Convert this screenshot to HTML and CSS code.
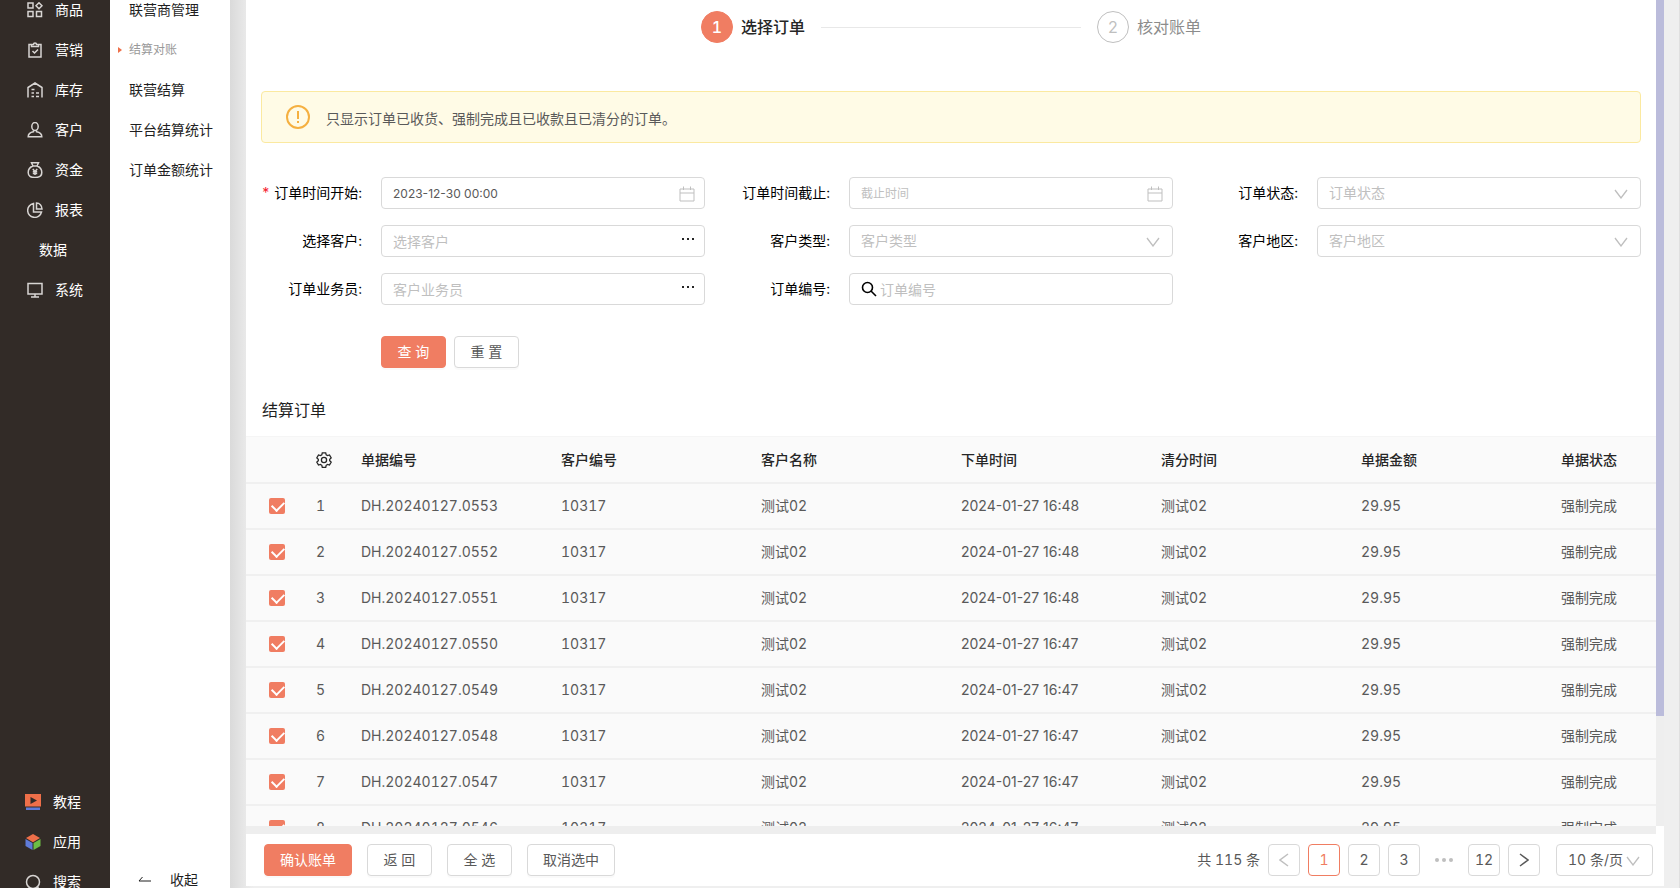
FILE: index.html
```html
<!DOCTYPE html>
<html lang="zh-CN">
<head>
    <meta charset="UTF-8">
    <meta name="viewport" content="width=device-width, initial-scale=1.0">
    <title>结算对账</title>
    <link rel="stylesheet" href="styles.css">
</head>
<body>
    <nav class="sidebar">
        <ul class="menu">
            <li><a href="#"><svg class="icon" viewBox="0 0 16 16"><rect x="1" y="1" width="5" height="5"/><rect x="1" y="9.500" width="5" height="5"/><rect x="9.500" y="9.500" width="5" height="5"/><path d="M12 .800 15 3.800 12 6.800 9 3.800z"/></svg>商品</a></li>
            <li><a href="#"><svg class="icon" viewBox="0 0 16 16"><path d="M4.500 2.500h-2.500v12.500h12v-12.500h-2.500M4.500 4.500v-2h2c0-2 3-2 3 0h2v2zM5.500 9l2 2 3.500-3.500"/></svg>营销</a></li>
            <li><a href="#"><svg class="icon" viewBox="0 0 16 16"><path d="M1 15.500V5.500L8 1l7 4.500v10M4.500 7.500h3M4.500 11h2.500M9 11h3M4.500 14.500h2.500M9 14.500h3"/></svg>库存</a></li>
            <li><a href="#"><svg class="icon" viewBox="0 0 16 16"><ellipse cx="8" cy="4.500" rx="3.200" ry="4"/><path d="M6.500 8.200v1.500C3 10.200 1.200 12 1.200 14.800h13.600c0-2.800-1.800-4.600-5.300-5.100V8.200"/></svg>客户</a></li>
            <li><a href="#"><svg class="icon" viewBox="0 0 16 16"><path d="M4.500.800h7L10 4c3 1 4.800 3.500 4.800 6.500 0 3.500-2.500 5-6.800 5s-6.800-1.500-6.800-5C1.200 7.500 3 5 6 4zM5.500 4h5M5.800 7 8 9.500 10.200 7M8 9.500V13M5.800 9.700h4.400M5.800 11.500h4.400"/></svg>资金</a></li>
            <li><a href="#"><svg class="icon" viewBox="0 0 16 16"><path d="M6.500 1.500A7 7 0 1 0 14.500 10H6.500zM9.500 1v6H15C15 3.500 12.500 1 9.500 1z"/></svg>报表</a></li>
            <li><a href="#" class="no-icon">数据</a></li>
            <li><a href="#"><svg class="icon" viewBox="0 0 16 16"><path d="M1 1.500h14v10.500H1zM8 12v3M4 15h8"/></svg>系统</a></li>
        </ul>
        <ul class="menu tools">
            <li><a href="#"><svg class="icon fill" viewBox="0 0 16 16"><path fill="#ee6f49" d="M0 0h16v12.500H0z"/><path fill="#322b27" d="M5.500 3v7L12 6.500z"/><path fill="#5f7bd8" d="M1 13.500h14V16H1z"/></svg>教程</a></li>
            <li><a href="#"><svg class="icon fill" viewBox="0 0 16 16"><path fill="#ee6f49" d="M8 0l7 4-7 4.200L1 4z"/><path fill="#5f7bd8" d="M.500 5l7 4v7l-7-4z"/><path fill="#6cbd45" d="M15.500 5l-7 4v7l7-4z"/></svg>应用</a></li>
            <li><a href="#"><svg class="icon" viewBox="0 0 16 16"><circle cx="8" cy="8" r="6.500"/><path d="M12 12.500l2.500 3"/></svg>搜索</a></li>
        </ul>
    </nav>

    <nav class="submenu">
        <ul>
            <li><a href="#">联营商管理</a></li>
            <li><a href="#" class="active">结算对账</a></li>
            <li><a href="#">联营结算</a></li>
            <li><a href="#">平台结算统计</a></li>
            <li><a href="#">订单金额统计</a></li>
        </ul>
        <button type="button" class="collapse"><svg viewBox="0 0 14 8"><path d="M4.500 1 1 5h12"/></svg>收起</button>
    </nav>

    <main class="main">
        <div class="panel">
            <div class="scroll-area">
                <div class="content">
                    <ol class="steps">
                        <li class="step current"><span class="num">1</span>选择订单</li>
                        <li class="line"></li>
                        <li class="step"><span class="num">2</span>核对账单</li>
                    </ol>

                    <div class="alert">
                        <svg viewBox="0 0 24 24"><circle cx="12" cy="12" r="11"/><path d="M12 6v8M12 16v2"/></svg>
                        <span>只显示订单已收货、强制完成且已收款且已清分的订单。</span>
                    </div>

                    <form class="search">
                        <div class="field">
                            <label for="start" class="required">订单时间开始:</label>
                            <div class="control">
                                <input type="text" id="start" class="small" value="2023-12-30 00:00">
                                <svg class="calendar" viewBox="0 0 16 16"><path d="M1 3h14v12H1zM1 7h14M4.500.500V4M11.500.500V4"/></svg>
                            </div>
                        </div>
                        <div class="field">
                            <label for="end">订单时间截止:</label>
                            <div class="control">
                                <input type="text" id="end" class="small" placeholder="截止时间">
                                <svg class="calendar" viewBox="0 0 16 16"><path d="M1 3h14v12H1zM1 7h14M4.500.500V4M11.500.500V4"/></svg>
                            </div>
                        </div>
                        <div class="field">
                            <label for="status">订单状态:</label>
                            <div class="control">
                                <select id="status"><option>订单状态</option></select>
                                <svg class="arrow" viewBox="0 0 14 10"><path d="M1 1l6 8 6-8"/></svg>
                            </div>
                        </div>
                        <div class="field">
                            <label for="customer">选择客户:</label>
                            <div class="control">
                                <input type="text" id="customer" placeholder="选择客户">
                                <button type="button" class="more" aria-label="选择客户"><svg viewBox="0 0 14 4"><path d="M1 1h2v2H1zM6 1h2v2H6zM11 1h2v2h-2z"/></svg></button>
                            </div>
                        </div>
                        <div class="field">
                            <label for="type">客户类型:</label>
                            <div class="control">
                                <select id="type"><option>客户类型</option></select>
                                <svg class="arrow" viewBox="0 0 14 10"><path d="M1 1l6 8 6-8"/></svg>
                            </div>
                        </div>
                        <div class="field">
                            <label for="area">客户地区:</label>
                            <div class="control">
                                <select id="area"><option>客户地区</option></select>
                                <svg class="arrow" viewBox="0 0 14 10"><path d="M1 1l6 8 6-8"/></svg>
                            </div>
                        </div>
                        <div class="field">
                            <label for="salesman">订单业务员:</label>
                            <div class="control">
                                <input type="text" id="salesman" placeholder="客户业务员">
                                <button type="button" class="more" aria-label="选择业务员"><svg viewBox="0 0 14 4"><path d="M1 1h2v2H1zM6 1h2v2H6zM11 1h2v2h-2z"/></svg></button>
                            </div>
                        </div>
                        <div class="field">
                            <label for="number">订单编号:</label>
                            <div class="control">
                                <input type="text" id="number" class="with-icon" placeholder="订单编号">
                                <svg class="magnifier" viewBox="0 0 16 16"><circle cx="6.500" cy="6.500" r="5"/><path d="M10 10l5 5"/></svg>
                            </div>
                        </div>
                        <div class="actions">
                            <button type="button" class="btn primary short">查 询</button>
                            <button type="reset" class="btn short">重 置</button>
                        </div>
                    </form>

                    <h2>结算订单</h2>

                    <table>
                        <colgroup>
                            <col class="col-check">
                            <col class="col-index">
                            <col class="col-data"><col class="col-data"><col class="col-data">
                            <col class="col-data"><col class="col-data"><col class="col-data">
                            <col>
                        </colgroup>
                        <thead>
                            <tr>
                                <th></th>
                                <th class="index"><svg class="gear" viewBox="0 0 16 16"><path d="M6.300.800h3.400l.5 2 1.300.800 2-.600 1.700 2.900-1.500 1.400v1.500l1.500 1.400-1.700 2.900-2-.600-1.300.800-.5 2H6.300l-.5-2-1.300-.800-2 .600-1.700-2.900 1.500-1.400V7.300L.800 5.900 2.500 3l2 .600 1.300-.800z"/><circle cx="8" cy="8" r="2.600"/></svg></th>
                                <th>单据编号</th>
                                <th>客户编号</th>
                                <th>客户名称</th>
                                <th>下单时间</th>
                                <th>清分时间</th>
                                <th>单据金额</th>
                                <th>单据状态</th>
                            </tr>
                        </thead>
                        <tbody>
                            <tr>
                                <td class="check"><input type="checkbox" aria-label="1" checked></td>
                                <td class="index">1</td>
                                <td>DH.20240127.0553</td>
                                <td>10317</td>
                                <td>测试02</td>
                                <td class="time">2024-01-27 16:48</td>
                                <td>测试02</td>
                                <td>29.95</td>
                                <td>强制完成</td>
                            </tr>
                            <tr>
                                <td class="check"><input type="checkbox" aria-label="2" checked></td>
                                <td class="index">2</td>
                                <td>DH.20240127.0552</td>
                                <td>10317</td>
                                <td>测试02</td>
                                <td class="time">2024-01-27 16:48</td>
                                <td>测试02</td>
                                <td>29.95</td>
                                <td>强制完成</td>
                            </tr>
                            <tr>
                                <td class="check"><input type="checkbox" aria-label="3" checked></td>
                                <td class="index">3</td>
                                <td>DH.20240127.0551</td>
                                <td>10317</td>
                                <td>测试02</td>
                                <td class="time">2024-01-27 16:48</td>
                                <td>测试02</td>
                                <td>29.95</td>
                                <td>强制完成</td>
                            </tr>
                            <tr>
                                <td class="check"><input type="checkbox" aria-label="4" checked></td>
                                <td class="index">4</td>
                                <td>DH.20240127.0550</td>
                                <td>10317</td>
                                <td>测试02</td>
                                <td class="time">2024-01-27 16:47</td>
                                <td>测试02</td>
                                <td>29.95</td>
                                <td>强制完成</td>
                            </tr>
                            <tr>
                                <td class="check"><input type="checkbox" aria-label="5" checked></td>
                                <td class="index">5</td>
                                <td>DH.20240127.0549</td>
                                <td>10317</td>
                                <td>测试02</td>
                                <td class="time">2024-01-27 16:47</td>
                                <td>测试02</td>
                                <td>29.95</td>
                                <td>强制完成</td>
                            </tr>
                            <tr>
                                <td class="check"><input type="checkbox" aria-label="6" checked></td>
                                <td class="index">6</td>
                                <td>DH.20240127.0548</td>
                                <td>10317</td>
                                <td>测试02</td>
                                <td class="time">2024-01-27 16:47</td>
                                <td>测试02</td>
                                <td>29.95</td>
                                <td>强制完成</td>
                            </tr>
                            <tr>
                                <td class="check"><input type="checkbox" aria-label="7" checked></td>
                                <td class="index">7</td>
                                <td>DH.20240127.0547</td>
                                <td>10317</td>
                                <td>测试02</td>
                                <td class="time">2024-01-27 16:47</td>
                                <td>测试02</td>
                                <td>29.95</td>
                                <td>强制完成</td>
                            </tr>
                            <tr>
                                <td class="check"><input type="checkbox" aria-label="8" checked></td>
                                <td class="index">8</td>
                                <td>DH.20240127.0546</td>
                                <td>10317</td>
                                <td>测试02</td>
                                <td class="time">2024-01-27 16:47</td>
                                <td>测试02</td>
                                <td>29.95</td>
                                <td>强制完成</td>
                            </tr>
                        </tbody>
                    </table>
                </div>
                <div class="scrollbar"><div class="thumb"></div></div>
            </div>
            <div class="scrollbar-x"></div>

            <footer class="footer">
                <div class="buttons">
                    <button type="button" class="btn primary">确认账单</button>
                    <button type="button" class="btn short">返 回</button>
                    <button type="button" class="btn short">全 选</button>
                    <button type="button" class="btn">取消选中</button>
                </div>
                <div class="pagination">
                    <span>共 115 条</span>
                    <button type="button" class="page prev" aria-label="上一页" disabled><svg viewBox="0 0 10 14"><path d="M9 1 1 7l8 6"/></svg></button>
                    <button type="button" class="page current">1</button>
                    <button type="button" class="page">2</button>
                    <button type="button" class="page">3</button>
                    <span class="dots"><svg viewBox="0 0 18 4"><circle cx="2" cy="2" r="2"/><circle cx="9" cy="2" r="2"/><circle cx="16" cy="2" r="2"/></svg></span>
                    <button type="button" class="page">12</button>
                    <button type="button" class="page" aria-label="下一页"><svg viewBox="0 0 10 14"><path d="M1 1l8 6-8 6"/></svg></button>
                    <div class="control page-size">
                        <select aria-label="每页条数"><option>10 条/页</option></select>
                        <svg class="arrow" viewBox="0 0 14 10"><path d="M1 1l6 8 6-8"/></svg>
                    </div>
                </div>
            </footer>
        </div>
    </main>
</body>
</html>
```
FILE: styles.css
```css
* {
    box-sizing: border-box;
}
body {
    margin: 0;
    display: flex;
    height: 100vh;
    overflow: hidden;
    background: #efefef;
    color: #595959;
    font-family: Inter, "Noto Sans CJK SC", sans-serif;
    font-size: 14px;
    font-variant-numeric: tabular-nums;
    line-height: 22px;
}
ul, ol {
    list-style: none;
    margin: 0;
    padding: 0;
}
a {
    text-decoration: none;
}
svg {
    display: block;
    fill: none;
    stroke: currentColor;
}
input, select, button {
    font: inherit;
    color: inherit;
}
button {
    cursor: pointer;
}

/* left menus */
.sidebar {
    flex: none;
    width: 110px;
    display: flex;
    flex-direction: column;
    justify-content: space-between;
    background: #322b27;
}
.menu {
    margin-top: -10px;
}
.menu a {
    display: flex;
    align-items: center;
    gap: 12px;
    height: 40px;
    padding-left: 27px;
    color: #fff;
}
.menu .no-icon {
    padding-left: 39px;
}
.icon {
    width: 16px;
    height: 16px;
    color: #d8d5d3;
    stroke-width: 1.5;
}
.icon.fill {
    stroke: none;
}
.tools {
    margin-bottom: -14px;
}
.tools a {
    padding-left: 25px;
}
.submenu {
    flex: none;
    width: 120px;
    display: flex;
    flex-direction: column;
    justify-content: space-between;
    background: #fff;
}
.submenu ul {
    margin-top: -10px;
}
.submenu a {
    display: flex;
    align-items: center;
    height: 40px;
    padding-left: 19px;
    color: #1f1f1f;
}
.submenu .active {
    padding-left: 8px;
    gap: 7px;
    font-size: 12px;
    color: #999;
}
.submenu .active::before {
    content: "";
    border: 3px solid transparent;
    border-left: 4px solid #ee6f49;
    border-right: 0;
}
.collapse {
    display: flex;
    align-items: center;
    gap: 18px;
    height: 40px;
    margin-bottom: -12px;
    padding: 0 0 0 28px;
    border: none;
    background: none;
    color: #1f1f1f;
}
.collapse svg {
    width: 14px;
    height: 8px;
}

/* content */
.main {
    flex: 1;
    min-width: 0;
    padding: 0 15px 2px 16px;
    border-right: 1px solid #e0e0e0;
    background: linear-gradient(90deg, #dadada, #e9e9e9 16px, #efefef 24px);
}
.panel {
    height: 100%;
    display: flex;
    flex-direction: column;
    background: #fff;
}
.scroll-area {
    flex: 1;
    min-height: 0;
    display: flex;
    overflow: hidden;
}
.content {
    flex: 1;
    min-width: 0;
}
.scrollbar {
    flex: none;
    width: 8px;
    background: #eee;
}
.thumb {
    height: calc(100% - 110px);
    background: #bbbcdb;
}
.scrollbar-x {
    flex: none;
    height: 8px;
    margin-right: 8px;
    background: #eee;
}

.steps {
    display: flex;
    align-items: center;
    gap: 16px;
    width: 500px;
    margin: 11px auto 48px;
    font-size: 16px;
}
.step {
    display: flex;
    align-items: center;
    gap: 8px;
    color: #8c8c8c;
}
.step.current {
    color: #262626;
    font-weight: 500;
}
.num {
    width: 32px;
    height: 32px;
    border: 1px solid #bfbfbf;
    border-radius: 50%;
    line-height: 30px;
    text-align: center;
    color: #bfbfbf;
}
.current .num {
    border-color: #f07d62;
    background: #f07d62;
    color: #fff;
}
.line {
    flex: 1;
    height: 1px;
    background: #e8e8e8;
}
.alert {
    display: flex;
    align-items: center;
    gap: 16px;
    height: 52px;
    margin: 0 15px;
    padding-left: 24px;
    border: 1px solid #fbe9a0;
    border-radius: 4px;
    background: #fffbe6;
}
.alert svg {
    width: 24px;
    height: 24px;
    stroke: #f5b041;
    stroke-width: 2;
}
.alert span {
    padding-top: 4px;
}

.search {
    display: grid;
    grid-template-columns: repeat(3, 1fr);
    gap: 16px 24px;
    margin: 34px 15px 0;
}
.field {
    display: flex;
    align-items: center;
}
.field label {
    flex: none;
    width: 120px;
    padding-right: 19px;
    text-align: right;
    color: #000;
}
.required::before {
    content: "*";
    margin-right: 4px;
    color: #f5222d;
}
.control {
    flex: 1;
    position: relative;
}
.control input,
.control select {
    display: block;
    width: 100%;
    height: 32px;
    padding: 0 11px;
    border: 1px solid #d9d9d9;
    border-radius: 4px;
    outline: none;
    background: #fff;
    appearance: none;
}
.control select {
    color: #bfbfbf;
}
.control .small {
    font-size: 12px;
    font-variant-numeric: normal;
}
.control .with-icon {
    padding-left: 30px;
}
.control ::placeholder {
    color: #bfbfbf;
}
.calendar, .arrow, .magnifier {
    position: absolute;
    pointer-events: none;
    color: #bfbfbf;
}
.calendar {
    top: 9px;
    right: 10px;
    width: 16px;
    height: 16px;
}
.arrow {
    top: 12px;
    right: 13px;
    width: 14px;
    height: 10px;
    stroke-width: 1.3;
}
.magnifier {
    top: 8px;
    left: 12px;
    width: 16px;
    height: 16px;
    color: #000;
    stroke-width: 1.6;
}
.more {
    position: absolute;
    top: 12px;
    right: 10px;
    padding: 0;
    border: none;
    background: none;
    color: #262626;
}
.more svg {
    width: 14px;
    height: 4px;
    fill: currentColor;
    stroke: none;
}
.actions {
    grid-column: 1 / -1;
    display: flex;
    gap: 8px;
    padding: 15px 0 0 120px;
}
.btn {
    height: 32px;
    padding: 0 15px;
    border: 1px solid #d9d9d9;
    border-radius: 4px;
    background: #fff;
    box-shadow: 0 2px 0 rgba(0, 0, 0, 0.02);
    white-space: nowrap;
}
.btn.short {
    min-width: 65px;
}
.btn.primary {
    border-color: #f07d62;
    background: #f07d62;
    color: #fff;
}

h2 {
    margin: 30px 16px 14px;
    font-size: 16px;
    font-weight: 400;
    line-height: 24px;
    color: #1f1f1f;
}
table {
    width: 100%;
    table-layout: fixed;
    border-collapse: separate;
    border-spacing: 0;
    background: #fafafa;
}
.col-check {
    width: 60px;
}
.col-index {
    width: 47px;
}
.col-data {
    width: 200px;
}
th, td {
    height: 46px;
    padding: 0 8px;
    border-bottom: 2px solid #f0f0f0;
    text-align: left;
    white-space: nowrap;
}
th {
    height: 48px;
    border-top: 1px solid #f5f5f5;
    font-weight: 500;
    color: #262626;
}
td.check {
    padding-left: 23px;
}
td.index {
    padding-left: 10px;
}
.time {
    font-variant-numeric: normal;
}
.gear {
    width: 16px;
    height: 16px;
    margin-left: 2px;
    stroke-width: 1.3;
}
.check input {
    display: block;
    position: relative;
    width: 16px;
    height: 16px;
    margin: 0;
    border-radius: 2px;
    background: #f07d62;
    appearance: none;
}
.check input:checked::after {
    content: "";
    position: absolute;
    top: 3px;
    left: 3px;
    width: 10px;
    height: 6px;
    border: solid #fff;
    border-width: 0 0 2px 2px;
    transform: rotate(-45deg);
}

.footer {
    flex: none;
    display: flex;
    align-items: center;
    justify-content: space-between;
    height: 52px;
    padding: 0 11px 0 18px;
}
.buttons {
    display: flex;
    gap: 15px;
}
.pagination {
    display: flex;
    align-items: center;
    gap: 8px;
}
.page {
    width: 32px;
    height: 32px;
    display: flex;
    align-items: center;
    justify-content: center;
    padding: 0;
    border: 1px solid #d9d9d9;
    border-radius: 4px;
    background: #fff;
}
.page svg {
    width: 10px;
    height: 14px;
    stroke-width: 1.5;
}
.page.current {
    border-color: #f07d62;
    color: #f07d62;
}
.page.prev {
    color: #bfbfbf;
}
.dots {
    width: 32px;
    display: flex;
    justify-content: center;
}
.dots svg {
    width: 18px;
    height: 4px;
    fill: #bfbfbf;
    stroke: none;
}
.page-size {
    flex: none;
    width: 97px;
    margin-left: 8px;
}
.page-size select {
    color: #595959;
}
```
